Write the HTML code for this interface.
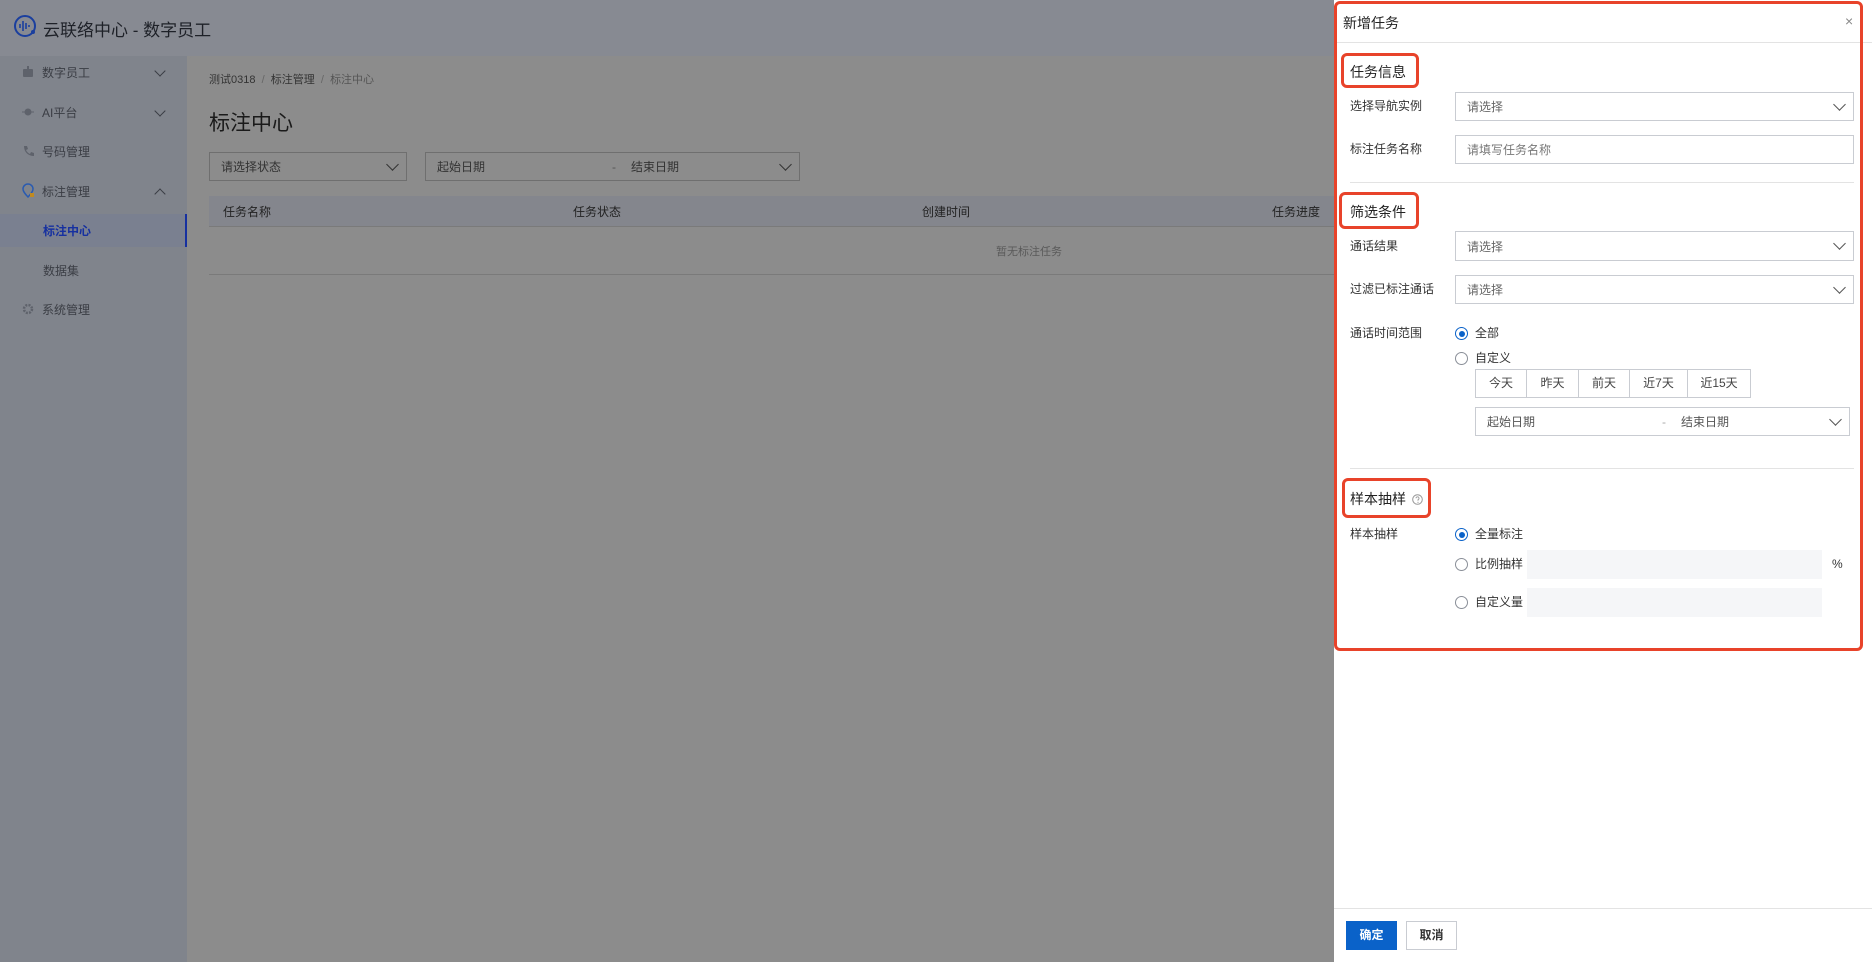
<!DOCTYPE html>
<html><head><meta charset="utf-8"><style>
*{box-sizing:border-box;margin:0;padding:0}
body{width:1872px;height:962px;position:relative;overflow:hidden;font-family:"Liberation Sans","Noto Sans CJK SC",sans-serif;background:#8c8c8c;color:#1a1a1a}
.a{position:absolute;white-space:nowrap}
.lbl{font-size:12px;color:#333;line-height:16px}
.sel{position:absolute;border:1px solid #c9ccd2;background:#fff;font-size:12px;color:#666;padding-left:11px;display:flex;align-items:center}
.chev{position:absolute;right:9px;top:calc(50% - 7px);width:9px;height:9px;border-right:1.2px solid #555;border-bottom:1.2px solid #555;transform:rotate(45deg)}
.red{position:absolute;border:3px solid #e8432a;border-radius:6px}
.radio{position:absolute;width:13px;height:13px;border:1px solid #8a8f98;border-radius:50%;background:#fff}
.radio.on{border-color:#0a62c9}
.radio.on:after{content:"";position:absolute;left:2.5px;top:2.5px;width:6px;height:6px;border-radius:50%;background:#0a62c9}
.side{font-size:12px;color:#3a3d44}
</style></head><body>
<!-- header -->
<div class="a" style="left:0;top:0;width:1334px;height:56px;background:#878a92"></div>
<svg class="a" style="left:13px;top:14px" width="24" height="24" viewBox="0 0 24 24"><circle cx="12" cy="12" r="10" fill="none" stroke="#1b3f9e" stroke-width="2"/><path d="M7 10v4M10 7v10M13 9v6M16 11v2" stroke="#1b3f9e" stroke-width="1.6"/><circle cx="20" cy="18" r="2" fill="#1b3f9e"/></svg>
<div class="a" style="left:43px;top:16px;font-size:17px;color:#1e2128">云联络中心 - 数字员工</div>
<!-- sidebar -->
<div class="a" style="left:0;top:56px;width:187px;height:906px;background:#80848c"></div>
<svg class="a" style="left:22px;top:66px" width="12" height="12"><rect x="1" y="3" width="10" height="8" rx="1" fill="#5e626b"/><rect x="5" y="0" width="2" height="3" fill="#5e626b"/></svg>
<div class="a side" style="left:42px;top:64px">数字员工</div>
<svg class="a" style="left:22px;top:106px" width="12" height="12"><circle cx="6" cy="6" r="3.5" fill="#5e626b"/><path d="M0 6h12" stroke="#5e626b"/></svg>
<div class="a side" style="left:42px;top:104px">AI平台</div>
<svg class="a" style="left:22px;top:145px" width="12" height="12"><path d="M2 1l3 0 1 3-2 1c1 2 2 3 4 4l1-2 3 1 0 3c-6 0-10-4-10-10z" fill="#5e626b"/></svg>
<div class="a side" style="left:42px;top:143px">号码管理</div>
<svg class="a" style="left:22px;top:183px" width="13" height="15"><path d="M6 1a5 5 0 0 1 5 5c0 3-5 8-5 8s-5-5-5-8a5 5 0 0 1 5-5z" fill="none" stroke="#2a5bb0" stroke-width="1.5"/><rect x="8" y="10" width="4" height="4" fill="#c08a20"/></svg>
<div class="a side" style="left:42px;top:183px">标注管理</div>
<div class="a" style="left:0;top:214px;width:187px;height:33px;background:#7a8090"></div>
<div class="a" style="left:185px;top:214px;width:2px;height:33px;background:#1630a0"></div>
<div class="a side" style="left:43px;top:222px;color:#1630a0;font-weight:bold">标注中心</div>
<div class="a side" style="left:43px;top:262px">数据集</div>
<svg class="a" style="left:22px;top:303px" width="12" height="12"><circle cx="6" cy="6" r="4" fill="none" stroke="#5e626b" stroke-width="2.5" stroke-dasharray="2 1.2"/></svg>
<div class="a side" style="left:42px;top:301px">系统管理</div>
<div class="a" style="left:156px;top:67px;width:8px;height:8px;border-right:1.3px solid #3a3d44;border-bottom:1.3px solid #3a3d44;transform:rotate(45deg)"></div>
<div class="a" style="left:156px;top:107px;width:8px;height:8px;border-right:1.3px solid #3a3d44;border-bottom:1.3px solid #3a3d44;transform:rotate(45deg)"></div>
<div class="a" style="left:156px;top:190px;width:8px;height:8px;border-left:1.3px solid #3a3d44;border-top:1.3px solid #3a3d44;transform:rotate(45deg)"></div>
<!-- content -->
<div class="a" style="left:187px;top:56px;width:1147px;height:906px;background:#8c8c8c;border-radius:8px 0 0 0"></div>
<div class="a" style="left:209px;top:71px;font-size:11px;color:#333">测试0318 <span style="color:#666">&nbsp;/&nbsp;</span> 标注管理 <span style="color:#666">&nbsp;/&nbsp;</span> <span style="color:#555">标注中心</span></div>
<div class="a" style="left:209px;top:107px;font-size:21px;color:#1a1a1a">标注中心</div>
<div class="sel" style="left:209px;top:152px;width:198px;height:29px;background:#8c8c8c;border-color:#6f6f6f;color:#333">请选择状态<span class="chev" style="border-color:#333"></span></div>
<div class="sel" style="left:425px;top:152px;width:375px;height:29px;background:#8c8c8c;border-color:#6f6f6f;color:#333">起始日期<span class="a" style="left:186px;color:#555">-</span><span class="a" style="left:205px">结束日期</span><span class="chev" style="border-color:#333"></span></div>
<div class="a" style="left:209px;top:196px;width:1125px;height:31px;background:#84868d;border-bottom:1px solid #7a7a7a"></div>
<div class="a lbl" style="left:223px;top:204px;color:#222">任务名称</div>
<div class="a lbl" style="left:573px;top:204px;color:#222">任务状态</div>
<div class="a lbl" style="left:922px;top:204px;color:#222">创建时间</div>
<div class="a lbl" style="left:1272px;top:204px;color:#222">任务进度</div>
<div class="a" style="left:996px;top:243px;font-size:11px;color:#5a5a5a">暂无标注任务</div>
<div class="a" style="left:209px;top:274px;width:1125px;height:1px;background:#7a7a7a"></div>
<!-- drawer -->
<div class="a" style="left:1334px;top:0;width:538px;height:962px;background:#fff"></div>
<div class="a" style="left:1343px;top:13px;font-size:14px;color:#222">新增任务</div>
<div class="a" style="left:1845px;top:13px;font-size:14px;color:#888">×</div>
<div class="a" style="left:1334px;top:42px;width:538px;height:1px;background:#e3e3e3"></div>
<div class="red" style="left:1334px;top:1px;width:529px;height:650px"></div>
<div class="red" style="left:1341px;top:53px;width:78px;height:35px"></div>
<div class="a" style="left:1350px;top:62px;font-size:14px;color:#222">任务信息</div>
<div class="a lbl" style="left:1350px;top:98px">选择导航实例</div>
<div class="sel" style="left:1455px;top:92px;width:399px;height:29px">请选择<span class="chev"></span></div>
<div class="a lbl" style="left:1350px;top:141px">标注任务名称</div>
<div class="sel" style="left:1455px;top:135px;width:399px;height:29px;color:#777">请填写任务名称</div>
<div class="a" style="left:1350px;top:182px;width:504px;height:1px;background:#e3e3e3"></div>
<div class="red" style="left:1339px;top:192px;width:80px;height:37px"></div>
<div class="a" style="left:1350px;top:202px;font-size:14px;color:#222">筛选条件</div>
<div class="a lbl" style="left:1350px;top:238px">通话结果</div>
<div class="sel" style="left:1455px;top:231px;width:399px;height:30px">请选择<span class="chev"></span></div>
<div class="a lbl" style="left:1350px;top:281px">过滤已标注通话</div>
<div class="sel" style="left:1455px;top:275px;width:399px;height:29px">请选择<span class="chev"></span></div>
<div class="a lbl" style="left:1350px;top:325px">通话时间范围</div>
<div class="radio on" style="left:1455px;top:327px"></div>
<div class="a lbl" style="left:1475px;top:325px">全部</div>
<div class="radio" style="left:1455px;top:352px"></div>
<div class="a lbl" style="left:1475px;top:350px">自定义</div>
<div class="a" style="left:1475px;top:369px;height:29px;display:flex;border:1px solid #c9ccd2;font-size:12px;color:#444">
<div style="width:51px;text-align:center;line-height:27px;border-right:1px solid #c9ccd2">今天</div>
<div style="width:52px;text-align:center;line-height:27px;border-right:1px solid #c9ccd2">昨天</div>
<div style="width:51px;text-align:center;line-height:27px;border-right:1px solid #c9ccd2">前天</div>
<div style="width:58px;text-align:center;line-height:27px;border-right:1px solid #c9ccd2">近7天</div>
<div style="width:62px;text-align:center;line-height:27px">近15天</div></div>
<div class="sel" style="left:1475px;top:407px;width:375px;height:29px;color:#555">起始日期<span class="a" style="left:186px;color:#aaa">-</span><span class="a" style="left:205px">结束日期</span><span class="chev"></span></div>
<div class="a" style="left:1350px;top:468px;width:504px;height:1px;background:#e3e3e3"></div>
<div class="red" style="left:1342px;top:478px;width:89px;height:40px"></div>
<div class="a" style="left:1350px;top:489px;font-size:14px;color:#222">样本抽样</div>
<svg class="a" style="left:1412px;top:494px" width="11" height="11"><circle cx="5.5" cy="5.5" r="4.8" fill="none" stroke="#999"/><path d="M4 4.3a1.5 1.5 0 1 1 2 1.4v1" fill="none" stroke="#999" stroke-width=".9"/><circle cx="6" cy="8.3" r=".6" fill="#999"/></svg>
<div class="a lbl" style="left:1350px;top:526px">样本抽样</div>
<div class="radio on" style="left:1455px;top:528px"></div>
<div class="a lbl" style="left:1475px;top:526px">全量标注</div>
<div class="radio" style="left:1455px;top:558px"></div>
<div class="a lbl" style="left:1475px;top:556px">比例抽样</div>
<div class="a" style="left:1527px;top:550px;width:295px;height:29px;background:#f5f6f8"></div>
<div class="a lbl" style="left:1832px;top:556px">%</div>
<div class="radio" style="left:1455px;top:596px"></div>
<div class="a lbl" style="left:1475px;top:594px">自定义量</div>
<div class="a" style="left:1527px;top:588px;width:295px;height:29px;background:#f5f6f8"></div>
<div class="a" style="left:1334px;top:908px;width:538px;height:1px;background:#e3e3e3"></div>
<div class="a" style="left:1346px;top:921px;width:51px;height:29px;background:#0a62c9;color:#fff;font-size:12px;font-weight:bold;text-align:center;line-height:29px">确定</div>
<div class="a" style="left:1406px;top:921px;width:51px;height:29px;border:1px solid #c9ccd2;color:#333;font-size:12px;font-weight:bold;text-align:center;line-height:27px">取消</div>
</body></html>
